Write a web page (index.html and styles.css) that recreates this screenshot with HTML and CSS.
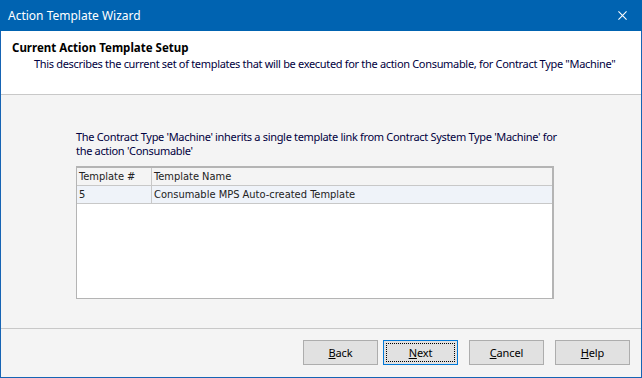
FILE: index.html
```html
<!DOCTYPE html>
<html>
<head>
<meta charset="utf-8">
<link rel="stylesheet" href="styles.css">
</head>
<body>
<div class="window">
  <div class="titlebar">
    <span class="title">Action Template Wizard</span>
    <svg class="close" width="10" height="10" viewBox="0 0 10 10"><path d="M0.5 0.5 L9.5 9.5 M9.5 0.5 L0.5 9.5" stroke="#fff" stroke-width="1.2"/></svg>
  </div>
  <div class="header">
    <div class="h-title">Current Action Template Setup</div>
    <div class="h-sub">This describes the current set of templates that will be executed for the action Consumable, for Contract Type "Machine"</div>
  </div>
  <div class="content">
    <p class="info">The Contract Type 'Machine' inherits a single template link from Contract System Type 'Machine' for the action 'Consumable'</p>
    <div class="grid">
      <div class="row head">
        <div class="c1">Template #</div>
        <div class="c2">Template Name</div>
      </div>
      <div class="row sel">
        <div class="c1">5</div>
        <div class="c2">Consumable MPS Auto-created Template</div>
      </div>
    </div>
  </div>
  <div class="footer">
    <button class="btn"><u>B</u>ack</button>
    <button class="btn focus"><span class="dots"><u>N</u>ext</span></button>
    <button class="btn gap"><u>C</u>ancel</button>
    <button class="btn gap"><u>H</u>elp</button>
  </div>
</div>
</body>
</html>
```
FILE: styles.css
```css
* { box-sizing: border-box; }
html, body { margin: 0; padding: 0; }
body { font-family: "Noto Sans", "Segoe UI", sans-serif; font-size: 11px; letter-spacing: -0.32px; color: #000; }
.window {
  width: 642px; height: 378px;
  border: 1px solid #1664b4;
  border-top: none;
  background: #f4f4f4;
  display: flex; flex-direction: column;
}
.titlebar {
  height: 31px; background: #0063b1; color: #fff;
  display: flex; align-items: center; justify-content: space-between;
  padding: 0 15px 0 8px;
  margin: 0 -1px;
}
.title { font-size: 12px; letter-spacing: 0; }
.close { display: block; width: 9px; height: 9px; }
.header {
  background: #fff; height: 64px;
  border-bottom: 1px solid #c8c8c8;
  padding: 9px 0 0 11px;
  white-space: nowrap;
}
.h-title { font-weight: bold; font-size: 11.5px; letter-spacing: 0; line-height: 15px; }
.h-sub { padding-left: 22px; margin-top: 1px; line-height: 15px; color: #000040; }
.content {
  flex: 1;
  padding: 35px 0 0 75px;
  border-bottom: 1px solid #c8c8c8;
}
.info { margin: 0; width: 490px; line-height: 14px; color: #000040; }
.grid {
  margin-top: 8px;
  width: 478px; height: 133px;
  background: #fff; border: 1px solid #b4b4b4;
  border-top-width: 2px; border-right-width: 2px;
  font-family: "DejaVu Sans Condensed", "DejaVu Sans", sans-serif; font-stretch: condensed;
  font-size: 11px; letter-spacing: 0; color: #222;
}
.row { display: flex; height: 18px; border-bottom: 1px solid #c8c8c8; }
.row.head { background: #f4f4f4; }
.row.sel { background: #eff3f9; }
.row > div { padding: 2px 0 0 2px; }
.c1 { width: 75px; border-right: 1px solid #c8c8c8; }
.c2 { flex: 1; }
.footer {
  height: 48px; display: flex; align-items: flex-start;
  padding: 11px 0 0 302px;
}
.btn {
  width: 75px; height: 25px;
  font-family: inherit; font-size: 11px; letter-spacing: -0.1px; color: #000;
  background: #e1e1e1; border: 1px solid #adadad;
  margin: 0 0 0 5px; padding: 0;
}
.btn:first-child { margin-left: 0; }
.btn.gap { margin-left: 11px; }
.btn.focus { border-color: #0078d7; padding: 2px; }
.dots { display: block; height: 100%; border: 1px dotted #000; line-height: 17px; }
u { text-decoration: underline; }
```
